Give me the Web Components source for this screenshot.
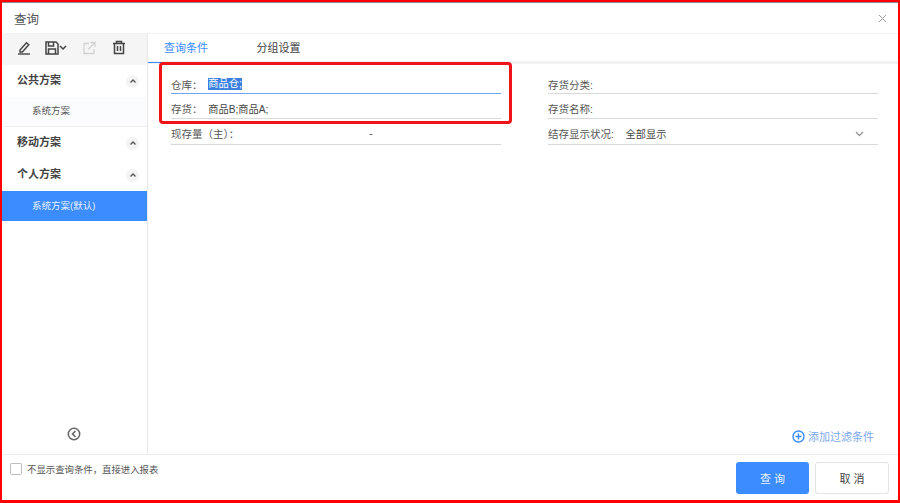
<!DOCTYPE html>
<html lang="zh"><head><meta charset="utf-8"><style>
html,body{margin:0;padding:0;background:#fff}
body{width:900px;height:503px;overflow:hidden;font-family:"Liberation Sans","Noto Sans CJK SC",sans-serif}
</style></head><body>
<query-dialog></query-dialog>
<script>
const FONT='"Liberation Sans","Noto Sans CJK SC",sans-serif';
class SchemeGroup extends HTMLElement{
  constructor(){super();const s=this.attachShadow({mode:'open'});
  s.innerHTML=`<style>
  :host{display:flex;align-items:center;justify-content:space-between;height:32px;padding:0 8px 4px 15px;box-sizing:border-box;font:bold 11px ${FONT};color:#444}
  i{width:13px;height:13px;border-radius:50%;background:#f3f3f3;display:flex;align-items:center;justify-content:center;margin-top:4px}
  svg{display:block}
  </style><span><slot></slot></span><i><svg width="8" height="6" viewBox="0 0 8 6"><path d="M1.500 4.500 4 2l2.500 2.500" fill="none" stroke="#555" stroke-width="1.300"/></svg></i>`}
}
customElements.define('scheme-group',SchemeGroup);
class SchemeItem extends HTMLElement{
  constructor(){super();const s=this.attachShadow({mode:'open'});
  s.innerHTML=`<style>
  :host{display:flex;align-items:center;height:30px;padding:0 0 3px 30px;box-sizing:border-box;font:9.500px ${FONT};color:#555;background:#fbfcfd;border-bottom:1px solid #f0f0f0}
  :host([active]){background:#3b8cff;color:#e9f2ff;border-bottom:0;padding-bottom:2px}
  </style><slot></slot>`}
}
customElements.define('scheme-item',SchemeItem);
class QueryField extends HTMLElement{
  static get observedAttributes(){return ['label']}
  constructor(){super();const s=this.attachShadow({mode:'open'});
  s.innerHTML=`<style>
  :host{display:flex;align-items:center;height:25.500px;box-sizing:border-box;border-bottom:1px solid #d9d9d9;font:10.500px ${FONT};color:#555;padding-top:5px}
  :host([focused]){border-bottom-color:#6ea6f5}
  .l{white-space:pre}
  .v{color:#444;flex:1;display:flex;align-items:center;font-size:10.200px}
  </style><span class="l"></span><span class="v"><slot></slot></span>`;
  }
  attributeChangedCallback(n,o,v){this.shadowRoot.querySelector('.l').textContent=v}
}
customElements.define('query-field',QueryField);
class QueryDialog extends HTMLElement{
  constructor(){super();const s=this.attachShadow({mode:'open'});
  s.innerHTML=`<style>
  :host{display:flex;flex-direction:column;width:900px;height:503px;box-sizing:border-box;border:solid #f00;border-width:2px 2px 3px 2px;position:relative;font-family:${FONT};background:#fff}
  .stripe{height:1px;background:#8a8a8a;flex:none}
  header{height:30px;flex:none;display:flex;align-items:center;justify-content:space-between;padding:0 11px 0 12px;font-size:12.500px;color:#555;border-bottom:1px solid #f2f2f2}
  main{flex:1;display:flex;min-height:0}
  aside{width:146px;flex:none;border-right:1px solid #e8e8e8;display:flex;flex-direction:column;box-sizing:border-box}
  .tools{height:31px;flex:none;background:#f5f5f5;display:flex;align-items:center;padding:0 0 4px 15px;box-sizing:border-box}
  .tools svg{display:block}
  .list{flex:1}
  .collapse{height:42px;display:flex;align-items:center;justify-content:center;flex:none;padding:1px 1px 0 0;box-sizing:border-box}
  .content{flex:1;display:flex;flex-direction:column;min-width:0}
  .tabs{height:27px;flex:none;display:flex;border-bottom:3px solid #f2f2f2;font-size:11px;color:#444;position:relative}
  .tab{width:73px;display:flex;align-items:center;justify-content:center;position:relative;padding:0 0 2px 3px;box-sizing:border-box}
  .tab.on{color:#3b8cff}
  .tab.on::after{content:"";position:absolute;left:0;right:0;bottom:-2px;height:1.500px;background:#3b8cff}
  .tab+.tab{width:112px}
  .grid{display:grid;grid-template-columns:330px 330px;column-gap:47px;padding:4px 0 0 23px}
  .grid>:nth-child(-n+2){padding-top:8px}
  .sel{color:#fff;background:#3a7fe0;line-height:12px}
  .add{margin-top:auto;height:42px;display:flex;align-items:center;justify-content:flex-end;gap:3px;padding:6px 24px 0 0;box-sizing:border-box;font-size:11px;color:#7ea9f0}
  footer{height:46px;flex:none;border-top:1px solid #ececec;display:flex;justify-content:space-between;padding:0 9px 0 8px;box-sizing:border-box}
  label{display:flex;align-items:center;gap:5px;height:28px;font-size:9.400px;color:#555}
  .box{width:10px;height:10px;border:1px solid #bbb;border-radius:1.500px;background:#fff}
  .btns{display:flex;gap:6px;padding-top:7px}
  button{width:74px;height:32px;border-radius:3px;font:11px ${FONT};letter-spacing:3px;box-sizing:border-box;padding:0 0 0 3px}
  .p{width:73px;background:#3b8cff;border:0;color:#e8f1ff}
  .c{background:#fff;border:1px solid #e3e3e3;color:#444}
  .mark{position:absolute;left:157px;top:60px;width:353px;height:62px;box-sizing:border-box;border:3px solid #f0141a;border-radius:4px}
  </style>
  <div class="stripe"></div>
  <header><span>查询</span><svg width="9" height="9" viewBox="0 0 9 9"><path d="M1 1l7 7M8 1 1 8" stroke="#999" stroke-width="1"/></svg></header>
  <main>
    <aside>
      <div class="tools">
        <svg width="14" height="14" viewBox="0 0 14 14" fill="none" stroke="#444"><path d="M3 9 9.500 1.800l2.300 2-6.500 7.200H3z" stroke-width="1.400"/><path d="M1 13h12" stroke-width="1.400"/></svg>
        <svg style="margin-left:14px" width="14" height="14" viewBox="0 0 14 14" fill="none" stroke="#444" stroke-width="1.500"><path d="M1 1h10l2 2v10H1z"/><path d="M3.500 1v4h5V1M3.500 13V8h7v5"/></svg>
        <svg width="8" height="6" viewBox="0 0 8 6"><path d="M1 1l3 3 3-3" fill="none" stroke="#444" stroke-width="1.500"/></svg>
        <svg style="margin-left:15px" width="14" height="14" viewBox="0 0 14 14" fill="none" stroke="#d2d2d2" stroke-width="1.300"><path d="M7 2.500H2v10h10V8"/><path d="M6 8.500 12.500 2M8.500 1.500h4.500V6"/></svg>
        <svg style="margin-left:16px" width="14" height="15" viewBox="0 0 14 15" fill="none" stroke="#444" stroke-width="1.500"><path d="M1 3.500h12M4.500 3.500V1.500h5v2M2.500 3.500v10h9v-10M5.500 6v5M8.500 6v5"/></svg>
      </div>
      <div class="list">
        <scheme-group>公共方案</scheme-group>
        <scheme-item>系统方案</scheme-item>
        <scheme-group>移动方案</scheme-group>
        <scheme-group>个人方案</scheme-group>
        <scheme-item active>系统方案(默认)</scheme-item>
      </div>
      <div class="collapse"><svg width="14" height="14" viewBox="0 0 14 14" fill="none" stroke="#666" stroke-width="1.500"><circle cx="7" cy="7" r="5.700"/><path d="M8.500 4 5.500 7l3 3" stroke-width="1.600"/></svg></div>
    </aside>
    <div class="content">
      <div class="tabs"><div class="tab on">查询条件</div><div class="tab">分组设置</div></div>
      <div class="grid">
        <query-field focused label="仓库：  "><span class="sel">商品仓;</span></query-field>
        <query-field label="存货分类:"></query-field>
        <query-field label="存货：  ">商品B;商品A;</query-field>
        <query-field label="存货名称:"></query-field>
        <query-field label="现存量（主）："><span style="margin-left:130px">-</span></query-field>
        <query-field label="结存显示状况:    ">全部显示<svg style="margin-left:auto;margin-right:14px" width="9" height="6" viewBox="0 0 9 6"><path d="M1 1l3.500 3.500L8 1" fill="none" stroke="#999" stroke-width="1.400"/></svg></query-field>
      </div>
      <div class="add"><svg width="13" height="13" viewBox="0 0 13 13" fill="none" stroke="#3b8cff" stroke-width="1.400"><circle cx="6.500" cy="6.500" r="5.500"/><path d="M6.500 3.500v6M3.500 6.500h6"/></svg>添加过滤条件</div>
    </div>
  </main>
  <footer>
    <label><span class="box"></span>不显示查询条件，直接进入报表</label>
    <div class="btns"><button class="p">查询</button><button class="c">取消</button></div>
  </footer>
  <div class="mark"></div>`}
}
customElements.define('query-dialog',QueryDialog);
</script>
</body></html>
